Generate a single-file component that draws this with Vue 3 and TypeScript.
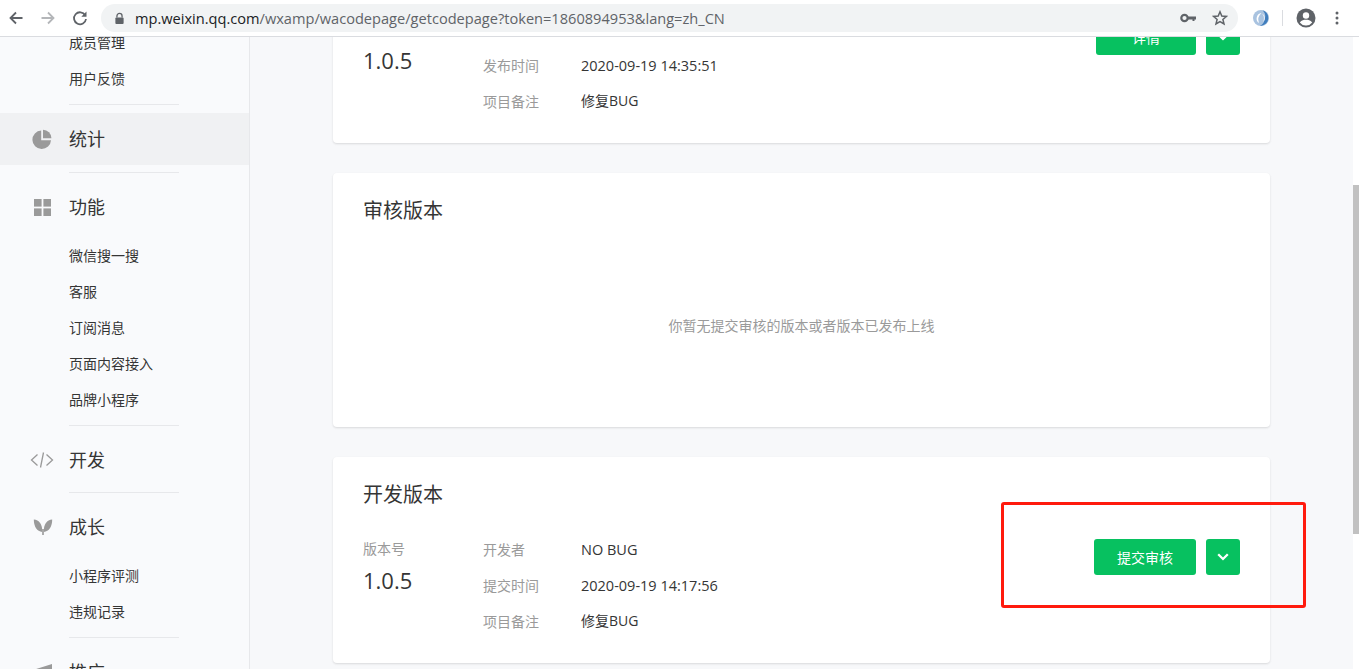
<template>
  <div class="page">
    <header class="toolbar">
      <button class="nav-btn">
        <svg viewBox="0 0 16 16" width="16" height="16"><path d="M14.500 8H2.500M8 2.500 2.500 8 8 13.500" fill="none" stroke="#5f6368" stroke-width="1.800" /></svg>
      </button>
      <button class="nav-btn">
        <svg viewBox="0 0 16 16" width="16" height="16"><path d="M1.500 8h12M8 2.500 13.500 8 8 13.500" fill="none" stroke="#b4b6b9" stroke-width="1.800" /></svg>
      </button>
      <button class="nav-btn">
        <svg viewBox="0 0 16 16" width="16" height="16"><path d="M13.200 5.200A6 6 0 1 0 14 9" fill="none" stroke="#5f6368" stroke-width="1.800" /><path d="M14.500 1.500v5.200H9.300z" fill="#5f6368" /></svg>
      </button>
      <div class="omnibox">
        <svg class="lock" viewBox="0 0 12 14" width="11" height="13"><path d="M3.200 6V4.200a2.800 2.800 0 0 1 5.600 0V6" fill="none" stroke="#5f6368" stroke-width="1.400" /><rect x="1.500" y="6" width="9" height="7" rx="1" fill="#5f6368" /></svg>
        <div class="url"><span class="host">mp.weixin.qq.com</span>/wxamp/wacodepage/getcodepage?token=1860894953&amp;lang=zh_CN</div>
        <svg class="key" viewBox="0 0 16 10" width="16" height="10"><circle cx="4.500" cy="5" r="3.200" fill="none" stroke="#5f6368" stroke-width="2.200" /><path d="M7.500 3.600H16V6.400H14.500V8H12.500V6.400H7.500z" fill="#5f6368" /></svg>
        <svg class="star" viewBox="0 0 16 16" width="16" height="16"><path d="M8 1.800 9.800 6l4.600.4-3.500 3 1.100 4.500L8 11.500l-4 2.400 1.100-4.500-3.500-3L6.200 6z" fill="none" stroke="#5f6368" stroke-width="1.500" /></svg>
      </div>
      <svg class="ext" viewBox="0 0 18 18" width="18" height="18">
        <circle cx="9" cy="9" r="8" fill="#a9c3e0" />
        <path d="M10.500 1.200A8 8 0 0 1 8 16.900 10 10 0 0 0 13 9 8 8 0 0 0 10.500 1.200z" fill="#3f7dbd" />
        <path d="M9.500 4A5.500 5.500 0 0 0 7 14 9 9 0 0 1 9.500 4z" fill="#fff" />
        <path d="M10 4.500A5 5 0 0 1 11 13 8 8 0 0 0 10 4.500z" fill="#e8eef6" />
      </svg>
      <span class="sep"></span>
      <svg class="avatar" viewBox="0 0 20 20" width="20" height="20">
        <circle cx="10" cy="10" r="9.500" fill="#5f6368" />
        <circle cx="10" cy="7.500" r="3.200" fill="#fff" />
        <path d="M3.800 14.500C5.500 12 8 11.800 10 11.800s4.500.2 6.200 2.700A7.500 7.500 0 0 1 10 17.500a7.500 7.500 0 0 1-6.200-3z" fill="#fff" />
      </svg>
      <svg class="dots" viewBox="0 0 4 14" width="4" height="14"><circle cx="2" cy="2" r="1.500" fill="#5f6368" /><circle cx="2" cy="7" r="1.500" fill="#5f6368" /><circle cx="2" cy="12" r="1.500" fill="#5f6368" /></svg>
    </header>

    <div class="viewport">
      <aside class="sidebar">
        <div class="sidebar-inner">
          <section v-for="group in groups" :key="group.title" class="nav-group" :class="{ compact: group.compact }">
            <div v-if="group.title" class="nav-title" :class="{ active: group.active }">
              <svg class="nav-icon" viewBox="0 0 20 20" width="20" height="20">
                <template v-if="group.icon === 'pie'">
                  <path d="M9.200 1.500V11.300H19A9.300 9.300 0 1 1 9.200 1.500z" fill="#9a9a9a" />
                  <path d="M11 .8A8.500 8.500 0 0 1 19.400 9.300H11z" fill="#9a9a9a" />
                </template>
                <template v-else-if="group.icon === 'grid'">
                  <rect x="2" y="2" width="7.600" height="7.600" fill="#9a9a9a" />
                  <rect x="11.400" y="2" width="7.600" height="7.600" fill="#9a9a9a" />
                  <rect x="2" y="11.400" width="7.600" height="7.600" fill="#9a9a9a" />
                  <rect x="11.400" y="11.400" width="7.600" height="7.600" fill="#9a9a9a" />
                </template>
                <template v-else-if="group.icon === 'code'">
                  <path d="M5.500 4.500-.5 10l6 5.500M14.500 4.500l6 5.500-6 5.500M11.500 2.500 8.500 17.500" fill="none" stroke="#9a9a9a" stroke-width="1.300" />
                </template>
                <template v-else-if="group.icon === 'leaf'">
                  <path d="M10.200 15C5 14.500 1.800 9.500 1.800 2.500 7 3 10.600 7 10.200 15z" fill="#9a9a9a" />
                  <path d="M11.800 15C17 14.500 20.200 9.500 20.200 2.500 15 3 11.400 7 11.800 15z" fill="#9a9a9a" />
                  <rect x="10.200" y="12" width="1.600" height="6" fill="#9a9a9a" />
                </template>
                <template v-else-if="group.icon === 'horn'">
                  <path d="M1 8 20 2V16L1 12z" fill="#9a9a9a" />
                </template>
              </svg>
              <span>{{ group.title }}</span>
            </div>
            <ul v-if="group.items.length" class="sub-list" :class="{ headless: !group.title }">
              <li v-for="item in group.items" :key="item">{{ item }}</li>
            </ul>
            <div class="divider"></div>
          </section>
        </div>
      </aside>

      <main class="content">
        <div class="content-inner">
          <section class="card">
            <h2 class="card-title">线上版本</h2>
            <div class="version-body">
              <div class="version-no">
                <div class="label">版本号</div>
                <div class="number">1.0.5</div>
              </div>
              <dl class="meta">
                <div class="meta-row"><dt>发布者</dt><dd>NO BUG</dd></div>
                <div class="meta-row"><dt>发布时间</dt><dd>2020-09-19 14:35:51</dd></div>
                <div class="meta-row"><dt>项目备注</dt><dd class="remark">修复BUG</dd></div>
              </dl>
              <div class="actions">
                <button class="btn detail">详情</button>
                <button class="btn caret"><svg viewBox="0 0 12 8" width="12" height="8"><path d="M1.200 1.300 6 6l4.800-4.700" fill="none" stroke="#fff" stroke-width="2.300" /></svg></button>
              </div>
            </div>
          </section>

          <section class="card review">
            <h2 class="card-title">审核版本</h2>
            <p class="empty">你暂无提交审核的版本或者版本已发布上线</p>
          </section>

          <section class="card">
            <h2 class="card-title">开发版本</h2>
            <div class="version-body">
              <div class="version-no">
                <div class="label">版本号</div>
                <div class="number">1.0.5</div>
              </div>
              <dl class="meta">
                <div class="meta-row"><dt>开发者</dt><dd>NO BUG</dd></div>
                <div class="meta-row"><dt>提交时间</dt><dd>2020-09-19 14:17:56</dd></div>
                <div class="meta-row"><dt>项目备注</dt><dd class="remark">修复BUG</dd></div>
              </dl>
              <div class="actions">
                <button class="btn submit">提交审核</button>
                <button class="btn caret"><svg viewBox="0 0 12 8" width="12" height="8"><path d="M1.200 1.300 6 6l4.800-4.700" fill="none" stroke="#fff" stroke-width="2.300" /></svg></button>
              </div>
            </div>
          </section>
        </div>
      </main>

      <div class="scrollbar"><div class="thumb"></div></div>
    </div>

    <div class="highlight"></div>
  </div>
</template>

<script setup lang="ts">
interface NavGroup {
  title: string
  icon?: string
  active?: boolean
  compact?: boolean
  items: string[]
}

const groups: NavGroup[] = [
  { title: '', items: ['成员管理', '用户反馈'] },
  { title: '统计', icon: 'pie', active: true, items: [] },
  { title: '功能', icon: 'grid', items: ['微信搜一搜', '客服', '订阅消息', '页面内容接入', '品牌小程序'] },
  { title: '开发', icon: 'code', compact: true, items: [] },
  { title: '成长', icon: 'leaf', items: ['小程序评测', '违规记录'] },
  { title: '推广', icon: 'horn', items: [] }
]
</script>

<style>
html,
body {
  margin: 0;
  height: 100%;
  overflow: hidden;
}
</style>

<style scoped>
.page {
  position: relative;
  width: 1359px;
  height: 669px;
  overflow: hidden;
  display: flex;
  flex-direction: column;
  background: #f7f8fa;
  font-family: "Open Sans", "Noto Sans CJK SC", sans-serif;
  color: #353535;
}
.toolbar {
  height: 36px;
  flex-shrink: 0;
  display: flex;
  align-items: center;
  background: #fff;
  border-bottom: 1px solid #dadce0;
}
.nav-btn {
  width: 32px;
  height: 32px;
  padding: 0;
  border: none;
  background: none;
  display: flex;
  align-items: center;
  justify-content: center;
}
.omnibox {
  margin-left: 5px;
  width: 1137px;
  height: 28px;
  border-radius: 14px;
  background: #f1f3f4;
  display: flex;
  align-items: center;
  padding: 0 10px 0 13px;
  box-sizing: border-box;
}
.lock {
  flex-shrink: 0;
}
.url {
  margin-left: 10px;
  flex: 1;
  font-size: 14.600px;
  color: #5f6368;
  white-space: nowrap;
}
.host {
  color: #202124;
}
.key {
  margin-right: 16px;
}
.ext {
  margin-left: 14px;
}
.sep {
  width: 1px;
  height: 16px;
  margin-left: 12px;
  background: #dadce0;
}
.avatar {
  margin-left: 13px;
}
.dots {
  margin-left: 19px;
}

.viewport {
  flex: 1;
  min-height: 0;
  display: flex;
  overflow: hidden;
}
.sidebar {
  width: 249px;
  flex-shrink: 0;
  background: #f9fafc;
  border-right: 1px solid #e7e8eb;
  overflow: hidden;
}
.sidebar-inner {
  margin-top: -12px;
}
.nav-group {
  padding-top: 8px;
}
.nav-group:first-child {
  padding-top: 0;
}
.nav-title {
  height: 52px;
  box-sizing: border-box;
  padding: 0 0 2px 32px;
  display: flex;
  align-items: center;
  font-size: 18px;
  color: #353535;
}
.nav-title.active {
  background: #f0f1f3;
}
.nav-icon {
  width: 20px;
  height: 20px;
  margin: 2px 17px 0 0;
  flex-shrink: 0;
  overflow: visible;
}
.sub-list {
  list-style: none;
  margin: 5px 0 0;
  padding: 0 0 0 69px;
}
.sub-list.headless {
  margin-top: 0;
}
.sub-list li {
  height: 36px;
  line-height: 36px;
  font-size: 14px;
  color: #353535;
}
.divider {
  width: 110px;
  height: 1px;
  margin: 7px 0 0 69px;
  background: #e7e8eb;
}
.compact .divider {
  margin-top: 6px;
}

.content {
  flex: 1;
  min-width: 0;
  overflow: hidden;
  padding-left: 83px;
}
.content-inner {
  width: 937px;
  margin-top: -100px;
  display: flex;
  flex-direction: column;
  gap: 30px;
}
.card {
  height: 206px;
  box-sizing: border-box;
  padding: 22px 30px 0;
  background: #fff;
  border-radius: 4px;
  box-shadow: 0 1px 2px rgba(150, 150, 150, 0.3);
}
.card.review {
  height: 254px;
  display: flex;
  flex-direction: column;
}
.card-title {
  margin: 0;
  font-size: 20px;
  font-weight: 400;
  line-height: 32px;
  color: #353535;
}
.empty {
  margin: 89px 0 0;
  text-align: center;
  font-size: 14px;
  line-height: 20px;
  color: #9a9a9a;
}
.version-body {
  display: flex;
  margin-top: 20px;
}
.version-no {
  width: 120px;
  flex-shrink: 0;
}
.label {
  font-size: 14px;
  line-height: 36px;
  color: #9a9a9a;
}
.number {
  font-size: 22px;
  line-height: 26px;
  color: #353535;
}
.meta {
  margin: 0;
  flex: 1;
}
.meta-row {
  display: flex;
  height: 36px;
  align-items: center;
}
.meta-row dt {
  width: 98px;
  font-size: 14px;
  color: #9a9a9a;
}
.meta-row dd {
  margin: 0;
  font-size: 14.500px;
  color: #353535;
}
.meta-row dd.remark {
  font-size: 14px;
  line-height: 18px;
  margin-bottom: 1px;
}
.actions {
  display: flex;
  gap: 10px;
  margin-top: 8px;
  flex-shrink: 0;
}
.btn {
  height: 36px;
  padding: 0;
  border: none;
  border-radius: 3px;
  background: #07c160;
  color: #fff;
  font-family: inherit;
  font-size: 14px;
  display: flex;
  align-items: center;
  justify-content: center;
}
.btn.detail {
  width: 100px;
}
.btn.submit {
  width: 102px;
}
.btn.caret {
  width: 34px;
}

.scrollbar {
  width: 6px;
  flex-shrink: 0;
  margin-left: auto;
  background: #fff;
}
.thumb {
  height: 349px;
  margin-top: 148px;
  background: #c1c1c1;
}

.highlight {
  position: absolute;
  left: 1001px;
  top: 502px;
  width: 305px;
  height: 106px;
  box-sizing: border-box;
  border: 3px solid #ff1a0d;
  border-radius: 3px;
}
</style>
